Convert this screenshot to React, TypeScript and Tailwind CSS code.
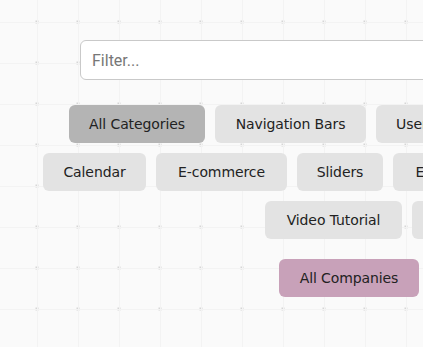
import React from "react";

const btn =
  "h-[38px] shrink-0 rounded-md text-[14px] text-[#222] flex items-center justify-center font-['DejaVu_Sans',sans-serif] tracking-[-0.1px]";

const rows = [
  { ml: "ml-[69px]", items: [
    { label: "All Categories", w: "w-[136px]", bg: "bg-[#b4b4b4]" },
    { label: "Navigation Bars", w: "w-[151px]", bg: "bg-[#e3e3e3]" },
    { label: "User Profiles", w: "w-[126px]", bg: "bg-[#e3e3e3]" },
  ]},
  { ml: "ml-[43px]", items: [
    { label: "Calendar", w: "w-[103px]", bg: "bg-[#e3e3e3]" },
    { label: "E-commerce", w: "w-[131px]", bg: "bg-[#e3e3e3]" },
    { label: "Sliders", w: "w-[86px]", bg: "bg-[#e3e3e3]" },
    { label: "Effects", w: "w-[92px]", bg: "bg-[#e3e3e3]" },
  ]},
  { ml: "ml-[265px]", items: [
    { label: "Video Tutorial", w: "w-[137px]", bg: "bg-[#e3e3e3]" },
    { label: "Forms", w: "w-[150px]", bg: "bg-[#e3e3e3]" },
  ]},
];

export default function App() {
  return (
    <div className="w-[423px] h-[347px] overflow-hidden bg-[#fafafa] bg-[linear-gradient(to_right,#f3f3f3_1px,transparent_1px),linear-gradient(to_bottom,#f3f3f3_1px,transparent_1px),radial-gradient(circle,#d6d6d6_1.5px,transparent_2px)] bg-[size:41px_41px] bg-[position:37px_22px,37px_22px,16.5px_1.5px]">
      <div className="pt-[40px] pl-[80px]">
        <input
          placeholder="Filter..."
          className="w-[400px] h-[40px] rounded-md border border-[#c9c9c9] bg-white pl-[11px] text-[16px] font-['Roboto',sans-serif] placeholder:text-[#777] outline-none"
        />
      </div>
      <div className="mt-[25px] flex flex-col gap-[10px]">
        {rows.map((r, i) => (
          <div key={i} className={`flex gap-[10px] ${r.ml}`}>
            {r.items.map((b) => (
              <button key={b.label} className={`${btn} ${b.w} ${b.bg}`}>
                {b.label}
              </button>
            ))}
          </div>
        ))}
      </div>
      <div className="mt-[20px] ml-[279px]">
        <button className={`${btn} w-[140px] bg-[#c8a1b9]`}>All Companies</button>
      </div>
    </div>
  );
}
